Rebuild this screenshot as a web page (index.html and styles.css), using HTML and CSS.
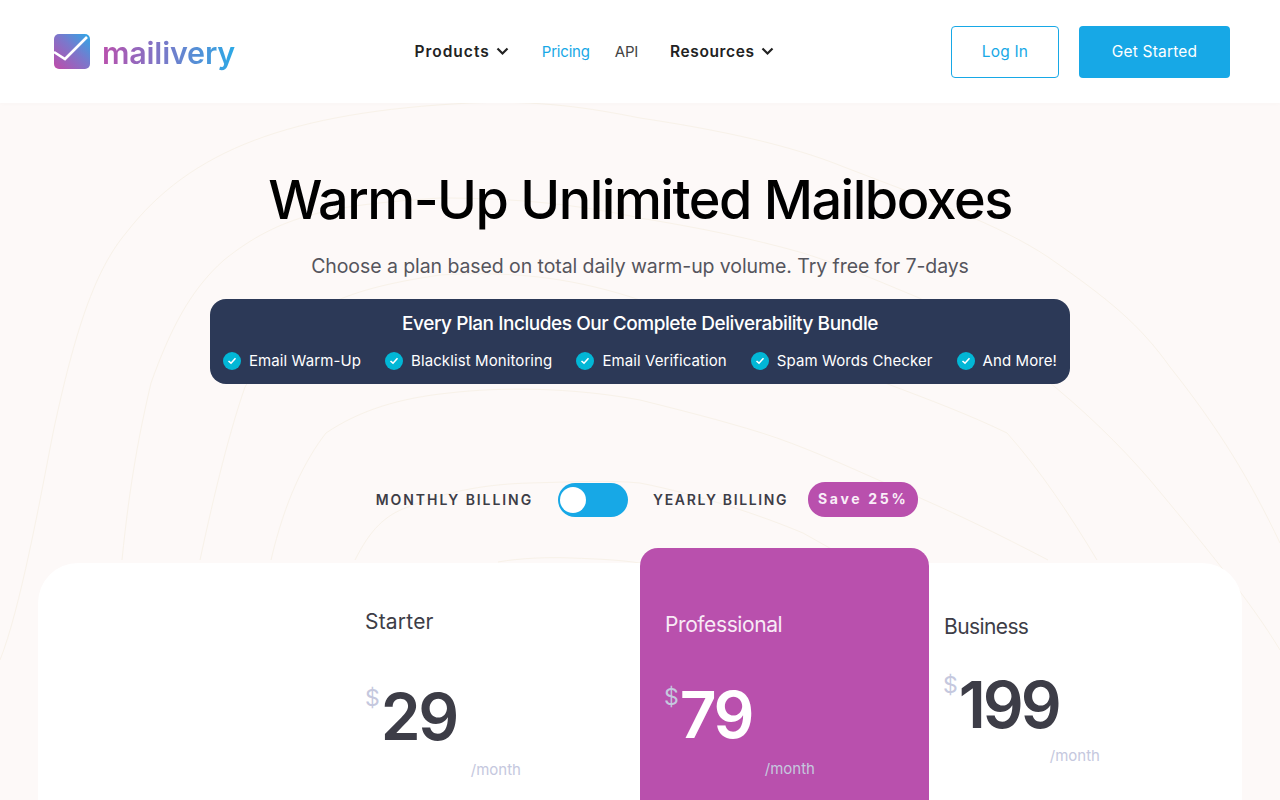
FILE: index.html
```html
<!DOCTYPE html>
<html lang="en">
<head>
<meta charset="UTF-8">
<meta name="viewport" content="width=device-width, initial-scale=1.0">
<title>Mailivery Pricing</title>
<link rel="stylesheet" href="styles.css">
</head>
<body>
<header class="topbar">
  <a class="logo" href="#">
    <svg class="logo-mark" width="36" height="36" viewBox="0 0 36 36">
      <defs>
        <linearGradient id="markGrad" x1="0" y1="1" x2="1" y2="0">
          <stop offset="0" stop-color="#c04aaa"/>
          <stop offset="0.55" stop-color="#7a78cc"/>
          <stop offset="1" stop-color="#2ca8e8"/>
        </linearGradient>
      </defs>
      <rect width="36" height="35" rx="5" fill="url(#markGrad)"/>
      <path d="M0 18 L11 25 L33 3" fill="none" stroke="#fff" stroke-width="2.6"/>
    </svg>
    <span class="logo-text">mailivery</span>
  </a>
  <nav class="nav">
    <a class="nav-strong" href="#">Products
      <svg width="13" height="9" viewBox="0 0 13 9"><path d="M1.5 1.5 L6.5 6.5 L11.5 1.5" fill="none" stroke="#222" stroke-width="2.2"/></svg>
    </a>
    <a class="nav-link nav-active" href="#">Pricing</a>
    <a class="nav-link" href="#">API</a>
    <a class="nav-strong nav-resources" href="#">Resources
      <svg width="13" height="9" viewBox="0 0 13 9"><path d="M1.5 1.5 L6.5 6.5 L11.5 1.5" fill="none" stroke="#222" stroke-width="2.2"/></svg>
    </a>
  </nav>
  <div class="actions">
    <a class="btn btn-outline" href="#">Log In</a>
    <a class="btn btn-solid" href="#">Get Started</a>
  </div>
</header>

<main class="page">
  <svg class="contours" width="1280" height="800" viewBox="0 0 1280 800" fill="none">
    <path d="M0 660 C20 610 40 500 53 433 C75 330 95 270 126 233 C190 150 290 112 470 103 C540 100 590 108 640 118 C720 130 790 145 844 167 C930 200 1000 225 1048 257 C1110 300 1140 325 1170 367 C1220 430 1250 480 1280 543"/>
    <path d="M122 560 C130 480 140 430 151 383 C170 330 190 290 224 260 C280 215 330 205 440 198 C520 198 580 205 640 218 C700 228 750 238 803 253 C850 268 880 282 917 297 C1000 335 1090 410 1150 480 C1200 540 1250 600 1280 650"/>
    <path d="M200 560 C215 490 230 430 245 387 C290 310 340 290 440 275 C520 270 580 280 640 300 C720 320 810 350 885 383 C930 400 970 415 1007 433 C1040 470 1070 515 1097 560"/>
    <path d="M271 560 C285 500 305 460 326 433 C360 410 400 398 449 393 C500 387 570 387 640 400 C680 410 720 420 762 433 C800 445 845 465 885 483 C950 510 1000 535 1048 560"/>
    <path d="M355 560 C370 530 385 515 408 507 C450 490 490 484 530 483 C570 482 610 480 640 483 C700 495 760 515 803 533 L851 560"/>
    <path d="M498 562 C520 558 550 557 571 558 C600 559 620 560 640 563"/>
  </svg>

  <section class="hero">
    <h1 class="hero-title">Warm-Up Unlimited Mailboxes</h1>
    <p class="hero-sub">Choose a plan based on total daily warm-up volume. Try free for 7-days</p>
    <div class="bundle">
      <h2 class="bundle-title">Every Plan Includes Our Complete Deliverability Bundle</h2>
      <ul class="bundle-list">
        <li><svg class="tick" viewBox="0 0 18 18"><circle cx="9" cy="9" r="9"/><path d="M5.5 9 L8 11.2 L12.5 6.2"/></svg>Email Warm-Up</li>
        <li><svg class="tick" viewBox="0 0 18 18"><circle cx="9" cy="9" r="9"/><path d="M5.5 9 L8 11.2 L12.5 6.2"/></svg>Blacklist Monitoring</li>
        <li><svg class="tick" viewBox="0 0 18 18"><circle cx="9" cy="9" r="9"/><path d="M5.5 9 L8 11.2 L12.5 6.2"/></svg>Email Verification</li>
        <li><svg class="tick" viewBox="0 0 18 18"><circle cx="9" cy="9" r="9"/><path d="M5.5 9 L8 11.2 L12.5 6.2"/></svg>Spam Words Checker</li>
        <li><svg class="tick" viewBox="0 0 18 18"><circle cx="9" cy="9" r="9"/><path d="M5.5 9 L8 11.2 L12.5 6.2"/></svg>And More!</li>
      </ul>
    </div>
  </section>

  <div class="billing">
    <span class="billing-label billing-monthly">MONTHLY BILLING</span>
    <span class="toggle"><span class="knob"></span></span>
    <span class="billing-label billing-yearly">YEARLY BILLING</span>
    <span class="save">Save 25%</span>
  </div>

  <section class="plans">
    <div class="plan-spacer"></div>
    <div class="plan plan-starter">
      <h3 class="plan-name">Starter</h3>
      <div class="price"><span class="cur">$</span><span class="amount">29</span></div>
      <div class="per">/month</div>
    </div>
    <div class="plan plan-pro">
      <h3 class="plan-name">Professional</h3>
      <div class="price"><span class="cur">$</span><span class="amount">79</span></div>
      <div class="per">/month</div>
    </div>
    <div class="plan plan-business">
      <h3 class="plan-name">Business</h3>
      <div class="price"><span class="cur">$</span><span class="amount">199</span></div>
      <div class="per">/month</div>
    </div>
  </section>
</main>
</body>
</html>
```

FILE: styles.css
```css
html, body {
  margin: 0;
  padding: 0;
  height: 800px;
  overflow: hidden;
}

body {
  font-family: Inter, "Noto Sans", sans-serif;
  background-color: #fdf9f8;
  color: #3d3d47;
}

a {
  text-decoration: none;
}

.topbar {
  height: 103px;
  box-sizing: border-box;
  padding: 0 50px 0 54px;
  background-color: #fff;
  display: flex;
  align-items: center;
  justify-content: space-between;
  position: relative;
  z-index: 2;
  box-shadow: 0 1px 4px rgba(0, 0, 0, 0.02);
}

.logo {
  display: flex;
  align-items: center;
  gap: 12px;
  width: 180px;
}

.logo-mark {
  flex: none;
}

.logo-text {
  font-size: 30.5px;
  font-weight: 600;
  letter-spacing: -0.2px;
  line-height: 36px;
  margin-top: 3px;
  background: linear-gradient(90deg, #b950ad 0%, #7b78c8 45%, #2ba9e6 100%);
  -webkit-background-clip: text;
  background-clip: text;
  color: transparent;
}

.nav {
  display: flex;
  align-items: center;
  margin-left: 3px;
}

.nav-strong {
  display: flex;
  align-items: center;
  gap: 6px;
  font-size: 15.5px;
  font-weight: 600;
  letter-spacing: 1px;
  color: #222;
}

.nav-link {
  font-size: 15px;
  color: #444;
  letter-spacing: -0.2px;
  margin-left: 25px;
}

.nav-active {
  color: #17a8e6;
  margin-left: 33px;
}

.nav-resources {
  letter-spacing: 0.6px;
  margin-left: 32px;
}

.actions {
  display: flex;
  gap: 20px;
}

.btn {
  height: 52px;
  box-sizing: border-box;
  border-radius: 4px;
  display: flex;
  align-items: center;
  justify-content: center;
  font-size: 15.5px;
  letter-spacing: 0.2px;
}

.btn-outline {
  width: 108px;
  border: 1px solid #17a8e6;
  color: #17a8e6;
  background-color: #fff;
}

.btn-solid {
  width: 151px;
  background-color: #17a8e6;
  color: #fff;
}

.page {
  position: relative;
}

.contours {
  position: absolute;
  left: 0;
  top: -103px;
  stroke: #f8f2e9;
  stroke-width: 1;
}

.hero {
  position: relative;
  display: flex;
  flex-direction: column;
  align-items: center;
}

.hero-title {
  margin: 65px 0 0;
  font-size: 54px;
  line-height: 64px;
  font-weight: 500;
  letter-spacing: -1.52px;
  color: #000;
}

.hero-sub {
  margin: 19px 0 0;
  font-size: 19.5px;
  line-height: 30px;
  letter-spacing: -0.08px;
  color: #55555d;
}

.bundle {
  width: 860px;
  height: 85px;
  margin-top: 18px;
  box-sizing: border-box;
  padding-top: 11px;
  border-radius: 16px;
  background-color: #2c3957;
  color: #fff;
}

.bundle-title {
  margin: 0;
  font-size: 19px;
  line-height: 28px;
  font-weight: 500;
  letter-spacing: -0.45px;
  text-align: center;
}

.bundle-list {
  list-style: none;
  margin: 11px 0 0;
  padding: 0;
  display: flex;
  justify-content: center;
  gap: 24px;
}

.bundle-list li {
  display: flex;
  align-items: center;
  gap: 8px;
  font-size: 15px;
  line-height: 24px;
  letter-spacing: 0.1px;
  white-space: nowrap;
}

.tick {
  width: 18px;
  height: 18px;
  flex: none;
}

.tick circle {
  fill: #02b7d6;
}

.tick path {
  fill: none;
  stroke: #fff;
  stroke-width: 1.6;
}

.billing {
  position: relative;
  margin-top: 98px;
  padding-left: 14px;
  height: 35px;
  display: flex;
  align-items: center;
  justify-content: center;
}

.billing-label {
  font-size: 14px;
  font-weight: 600;
  color: #3d3d47;
}

.billing-monthly {
  letter-spacing: 1.93px;
}

.billing-yearly {
  letter-spacing: 1.64px;
}

.toggle {
  width: 70px;
  height: 34px;
  margin: 0 25px;
  border-radius: 17px;
  background-color: #17a8e6;
  display: flex;
  align-items: center;
  padding-left: 2px;
  box-sizing: border-box;
}

.knob {
  width: 26px;
  height: 26px;
  border-radius: 50%;
  background-color: #fff;
}

.save {
  margin-left: 20px;
  width: 110px;
  height: 35px;
  border-radius: 17px;
  background-color: #b950ad;
  color: #f9eef8;
  font-size: 14px;
  font-weight: 700;
  letter-spacing: 2.7px;
  text-align: center;
  line-height: 33px;
}

.plans {
  position: relative;
  width: 1204px;
  height: 600px;
  margin: 46px auto 0 38px;
  border-radius: 40px;
  background-color: #fff;
  display: grid;
  grid-template-columns: 327px 275px 289px 313px;
}

.plan-name {
  margin: 0;
  font-size: 21px;
  line-height: 30px;
  font-weight: 400;
  letter-spacing: -0.4px;
}

.price {
  display: flex;
  align-items: flex-start;
}

.cur {
  font-size: 23px;
  line-height: 28px;
  color: #c5c8de;
  margin-right: 1px;
}

.amount {
  font-size: 64px;
  line-height: 64px;
  font-weight: 600;
  letter-spacing: -2.5px;
  color: #3d3d47;
}

.per {
  width: 156px;
  text-align: right;
  font-size: 15px;
  line-height: 20px;
  color: #c5c8de;
}

.plan-starter {
  padding-top: 44px;
}

.plan-starter .plan-name {
  letter-spacing: 0.2px;
}

.plan-starter .price {
  margin-top: 48px;
}

.plan-starter .cur {
  margin-top: -1px;
}

.plan-starter .per {
  margin-top: 11px;
}

.plan-pro {
  margin-top: -15px;
  padding: 62px 0 0 25px;
  height: 600px;
  border-radius: 18px;
  background-color: #b950ad;
  color: #f8eaf6;
}

.plan-pro .price {
  margin-top: 43px;
  margin-left: -1px;
}

.plan-pro .cur {
  margin-top: 0;
}

.plan-pro .amount {
  color: #fff;
}

.plan-pro .per {
  margin-top: 12px;
  width: 150px;
}

.plan-business {
  padding: 49px 0 0 15px;
}

.plan-business .plan-name {
  letter-spacing: -0.6px;
}

.plan-business .price {
  margin-top: 31px;
  margin-left: -1px;
}

.plan-business .cur {
  margin-top: -2px;
  margin-right: 1px;
}

.plan-business .amount {
  letter-spacing: -3px;
}

.plan-business .per {
  margin-top: 9px;
}
```
